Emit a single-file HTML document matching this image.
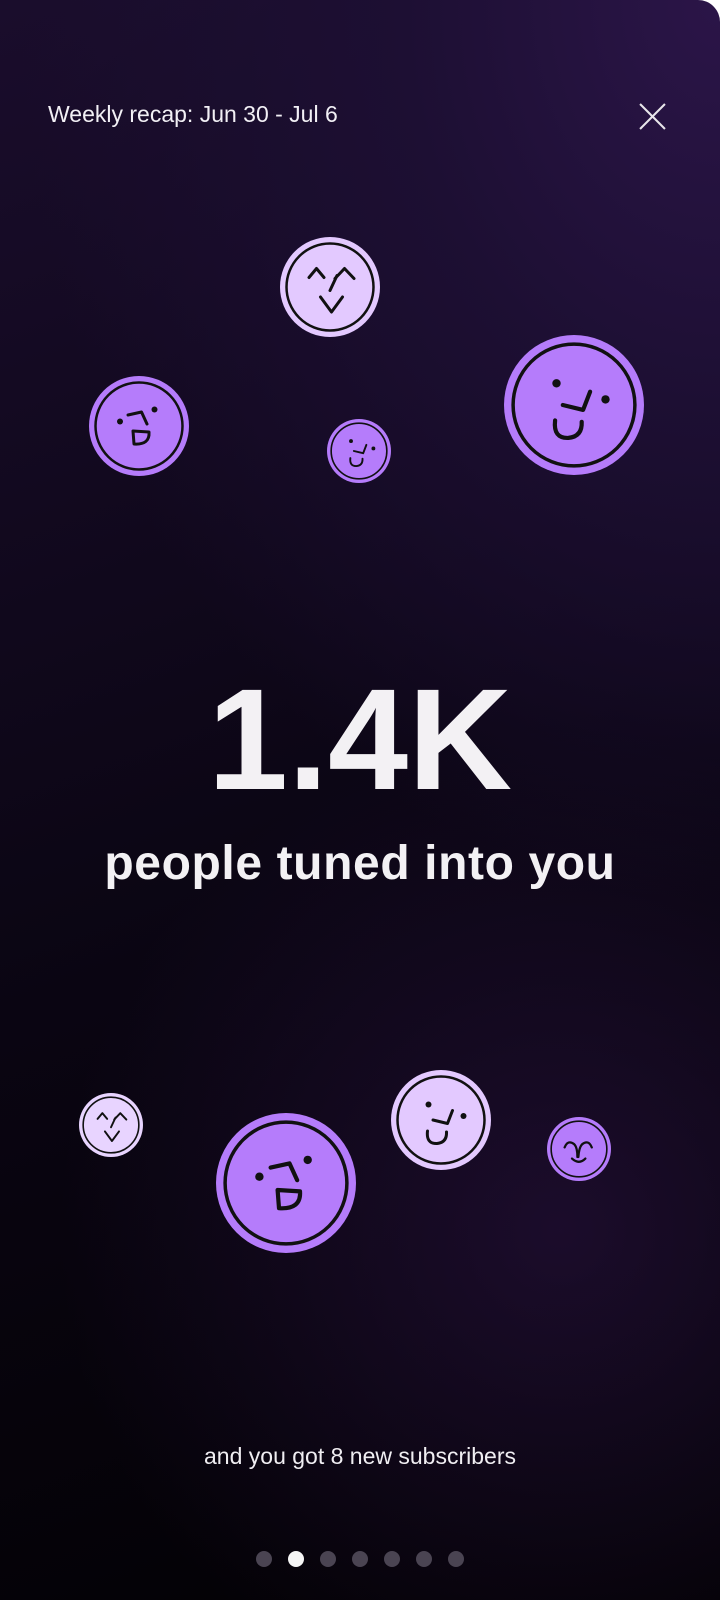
<!DOCTYPE html>
<html><head><meta charset="utf-8"><style>
html,body{margin:0;padding:0;background:#fff;}
#p{position:relative;width:720px;height:1600px;overflow:hidden;border-top-right-radius:22px;
background:radial-gradient(ellipse 700px 900px at 720px 0px,#2b1548 0%,#1d0f33 45%,rgba(10,5,20,0) 100%),
radial-gradient(ellipse 500px 500px at 560px 1230px,rgba(45,20,70,0.55) 0%,rgba(0,0,0,0) 100%),
linear-gradient(160deg,#1a0d2c 0%,#0a0512 55%,#020103 100%);
font-family:"Liberation Sans",sans-serif;color:#fff;}
.t{position:absolute;left:0;width:720px;text-align:center;white-space:nowrap;}
.dot{position:absolute;top:1551px;width:16px;height:16px;border-radius:50%;background:#4a4452;}
</style></head><body><div id="p">
<div style="position:absolute;left:48px;top:101px;font-size:23px;color:#f2f0f5;">Weekly recap: Jun 30 - Jul 6</div>
<svg style="position:absolute;left:639px;top:103px" width="27" height="27" viewBox="0 0 26 26"><path d="M1 1L25 25M25 1L1 25" stroke="#e8e6ea" stroke-width="2"/></svg>
<svg width="720" height="1600" style="position:absolute;left:0;top:0">
<defs>
<g id="ring"><circle r="1" fill="currentColor"/><circle r="0.87" fill="none" stroke="#111" stroke-width="0.05"/></g>
<symbol id="A" viewBox="-1 -1 2 2"><use href="#ring"/><g stroke="#111" stroke-width="0.06" fill="none" stroke-linecap="round" stroke-linejoin="round">
<path d="M-0.22,-0.22L0.05,-0.28L0.16,-0.04"/><path d="M-0.12,0.1L-0.1,0.36Q0.22,0.38 0.2,0.12Z"/></g>
<circle cx="-0.38" cy="-0.09" r="0.06" fill="#111"/><circle cx="0.31" cy="-0.33" r="0.06" fill="#111"/></symbol>
<symbol id="B" viewBox="-1 -1 2 2"><use href="#ring"/><g stroke="#111" stroke-width="0.06" fill="none" stroke-linecap="round" stroke-linejoin="round">
<path d="M-0.42,-0.19L-0.27,-0.37L-0.12,-0.19"/><path d="M0.1,-0.17L0.29,-0.37L0.48,-0.17"/><path d="M0.14,-0.23L0,0.07"/><path d="M-0.19,0.2L0.03,0.5L0.25,0.2"/></g></symbol>
<symbol id="C" viewBox="-1 -1 2 2"><use href="#ring"/><g stroke="#111" stroke-width="0.06" fill="none" stroke-linecap="round" stroke-linejoin="round">
<path d="M0.23,-0.19L0.13,0.07L-0.16,0"/><path d="M-0.27,0.22Q-0.3,0.48 -0.08,0.47Q0.12,0.45 0.11,0.24"/></g>
<circle cx="-0.25" cy="-0.31" r="0.06" fill="#111"/><circle cx="0.45" cy="-0.08" r="0.06" fill="#111"/></symbol>
<symbol id="D" viewBox="-1 -1 2 2"><use href="#ring"/><g stroke="#111" stroke-width="0.07" fill="none" stroke-linecap="round" stroke-linejoin="round">
<path d="M-0.45,-0.05Q-0.35,-0.3 -0.15,-0.15Q-0.05,-0.05 -0.05,0.25"/><path d="M0.4,-0.05Q0.3,-0.3 0.1,-0.15Q0,-0.05 -0.02,0.25"/><path d="M-0.22,0.3Q0,0.5 0.2,0.3"/></g></symbol>
</defs>
<use href="#B" x="280" y="237" width="100" height="100" style="color:#e3c9ff"/>
<use href="#A" x="89" y="376" width="100" height="100" style="color:#b57cfb"/>
<use href="#C" x="327" y="419" width="64" height="64" style="color:#b57cfb"/>
<use href="#C" x="504" y="335" width="140" height="140" style="color:#b57cfb"/>
<use href="#B" x="79" y="1093" width="64" height="64" style="color:#e8d4ff"/>
<use href="#A" x="216" y="1113" width="140" height="140" style="color:#b57cfb"/>
<use href="#C" x="391" y="1070" width="100" height="100" style="color:#e3c9ff"/>
<use href="#D" x="547" y="1117" width="64" height="64" style="color:#b57cfb"/>
</svg>
<div class="t" style="top:836px;font-size:48px;font-weight:bold;color:#f3f1f4;letter-spacing:0.6px;">people tuned into you</div>
<div class="t" style="top:665px;font-size:144px;font-weight:bold;color:#f3f1f4;line-height:150px;">1.4K</div>
<div class="t" style="top:1443px;font-size:23px;color:#f0eef2;">and you got 8 new subscribers</div>
<div class="dot" style="left:256px"></div>
<div class="dot" style="left:288px;background:#f5f5f5"></div>
<div class="dot" style="left:320px"></div>
<div class="dot" style="left:352px"></div>
<div class="dot" style="left:384px"></div>
<div class="dot" style="left:416px"></div>
<div class="dot" style="left:448px"></div>
</div></body></html>
